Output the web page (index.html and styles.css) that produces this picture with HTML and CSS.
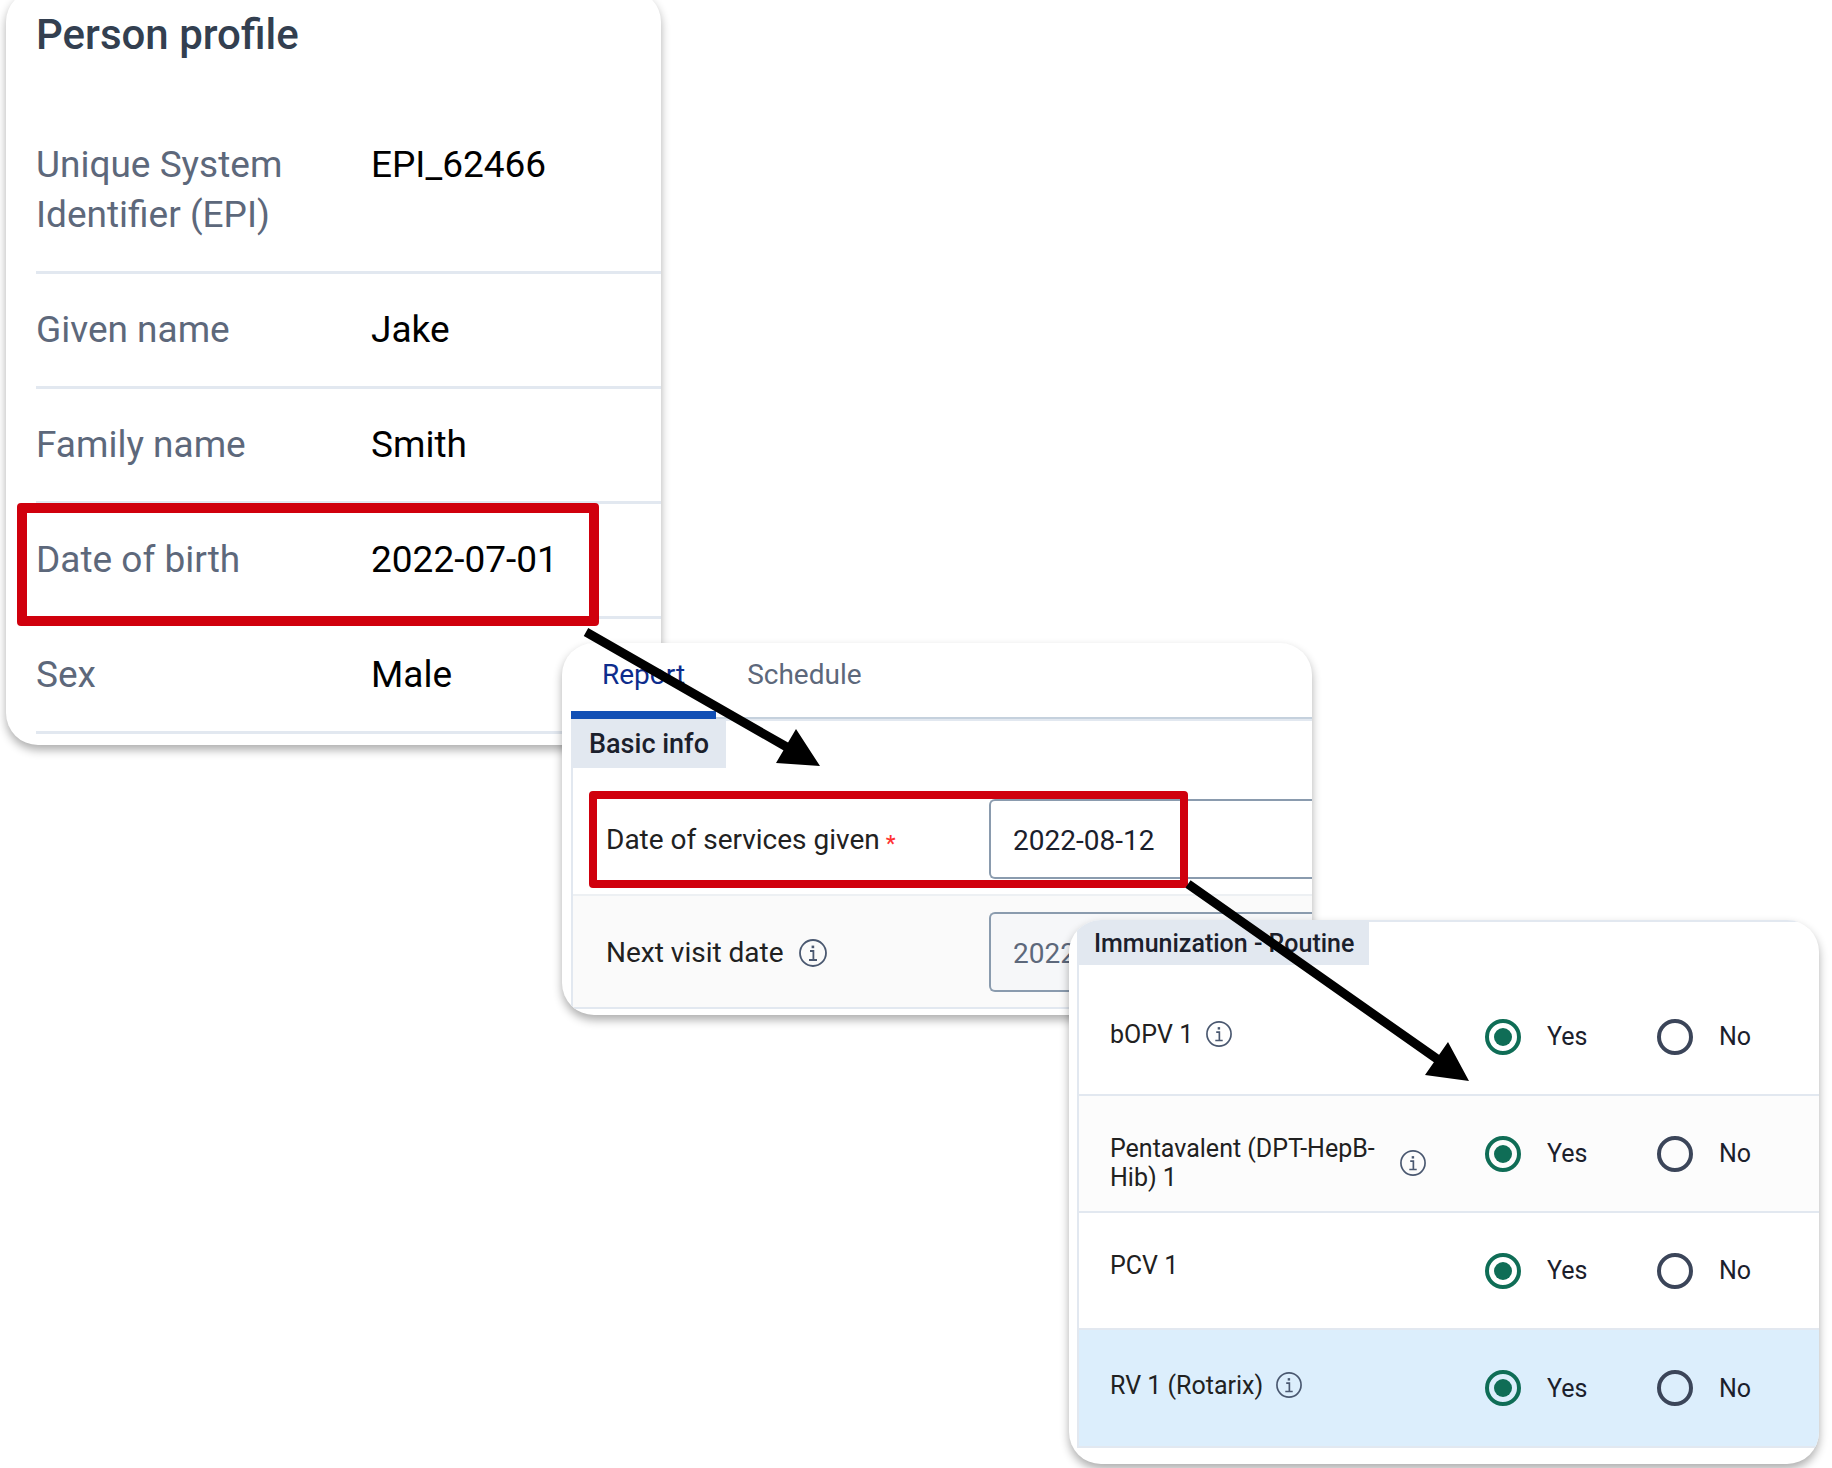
FILE: index.html
```html
<!DOCTYPE html>
<html lang="en">
<head>
<meta charset="utf-8">
<title>Person profile</title>
<link rel="stylesheet" href="styles.css">
</head>
<body>
<svg class="symbols" aria-hidden="true">
  <symbol id="info" viewBox="0 0 28 28">
    <circle cx="14" cy="14" r="13" fill="none" stroke="currentColor" stroke-width="1.8"/>
    <path d="M11 12h3.4v8.6M10 21h8" fill="none" stroke="currentColor" stroke-width="1.8"/>
    <rect x="12.6" y="6.6" width="2.6" height="2.6" fill="currentColor"/>
  </symbol>
</svg>
<main class="canvas">
  <section class="card profile">
    <h1 class="profile-title">Person profile</h1>
    <dl class="facts">
      <div class="fact"><dt>Unique System Identifier (EPI)</dt><dd>EPI_62466</dd></div>
      <div class="fact"><dt>Given name</dt><dd>Jake</dd></div>
      <div class="fact"><dt>Family name</dt><dd>Smith</dd></div>
      <div class="fact"><dt>Date of birth</dt><dd>2022-07-01</dd></div>
      <div class="fact"><dt>Sex</dt><dd>Male</dd></div>
    </dl>
  </section>

  <section class="card report">
    <nav class="tabs">
      <button class="tab active" type="button">Report</button>
      <button class="tab" type="button">Schedule</button>
    </nav>
    <div class="section">
      <h2 class="section-title">Basic info</h2>
      <div class="field">
        <label for="service-date">Date of services given <span class="required">*</span></label>
        <input id="service-date" type="text" value="2022-08-12">
      </div>
      <div class="field shaded">
        <label for="next-date">Next visit date <svg class="info"><use href="#info"/></svg></label>
        <input id="next-date" type="text" value="2022-09-09" readonly>
      </div>
    </div>
  </section>

  <section class="card vaccines">
    <div class="section">
      <h2 class="section-title">Immunization - Routine</h2>
      <div class="dose" role="radiogroup" aria-labelledby="bopv">
        <div class="dose-name"><span id="bopv">bOPV 1</span><svg class="info"><use href="#info"/></svg></div>
        <label class="choice"><input type="radio" name="bopv" checked>Yes</label>
        <label class="choice"><input type="radio" name="bopv">No</label>
      </div>
      <div class="dose shaded" role="radiogroup" aria-labelledby="penta">
        <div class="dose-name"><span id="penta">Pentavalent (DPT-HepB-Hib) 1</span><svg class="info"><use href="#info"/></svg></div>
        <label class="choice"><input type="radio" name="penta" checked>Yes</label>
        <label class="choice"><input type="radio" name="penta">No</label>
      </div>
      <div class="dose" role="radiogroup" aria-labelledby="pcv">
        <div class="dose-name"><span id="pcv">PCV 1</span></div>
        <label class="choice"><input type="radio" name="pcv" checked>Yes</label>
        <label class="choice"><input type="radio" name="pcv">No</label>
      </div>
      <div class="dose selected" role="radiogroup" aria-labelledby="rv">
        <div class="dose-name"><span id="rv">RV 1 (Rotarix)</span><svg class="info"><use href="#info"/></svg></div>
        <label class="choice"><input type="radio" name="rv" checked>Yes</label>
        <label class="choice"><input type="radio" name="rv">No</label>
      </div>
    </div>
  </section>

  <div class="highlight birth"></div>
  <div class="highlight service"></div>
  <svg class="arrows" viewBox="0 0 1832 1468" aria-hidden="true">
    <path d="M586 632L792 750M1188 884L1440 1061" stroke="#000" stroke-width="9"/>
    <path d="M796 729L820 766L776 763ZM1448 1042L1469 1081L1425 1075Z"/>
  </svg>
</main>
</body>
</html>
```
FILE: styles.css
```css
* { box-sizing: border-box; }

body {
  margin: 0;
  background: #fff;
  color: #212121;
  font-family: Roboto, "Liberation Sans", sans-serif;
}

h1, h2, dl, dd { margin: 0; }

.symbols { position: absolute; width: 0; height: 0; }

/* Free canvas that the overlapping cards are placed on */
.canvas {
  position: relative;
  min-height: 1468px;
  overflow: hidden;
}

.card {
  position: absolute;
  overflow: hidden;
  background: #fff;
  border-radius: 32px;
  box-shadow: 0 5px 10px rgba(0, 0, 0, .32);
}

/* Person profile */
.profile {
  left: 6px;
  top: -10px;
  width: 655px;
  padding: 21px 0 11px 30px;
}

.profile-title {
  color: #333f50;
  font-size: 42px;
  font-weight: 500;
  line-height: 48px;
}

.facts { padding-top: 50px; font-size: 37px; line-height: 50px; }

.fact {
  display: flex;
  padding: 31px 0;
  border-bottom: 3px solid #e2e8f0;
}

.fact dt { width: 335px; padding-right: 60px; color: #5d687b; }
.fact dd { color: #000; }

/* Report */
.report {
  left: 562px;
  top: 643px;
  width: 750px;
  padding: 0 0 6px 9px;
  font-size: 28px;
}

.tabs {
  display: flex;
  height: 76px;
  border-bottom: 2px solid #c5d1dd;
}

.tab {
  height: 76px;
  padding: 0 31px 5px;
  border: 0;
  border-bottom: 8px solid transparent;
  background: none;
  color: #5d687b;
  font: inherit;
}

.tab.active {
  border-color: #1250b5;
  color: #0d2c8c;
}

.section {
  border-top: 2px solid #e2e8f0;
  border-left: 2px solid #e2e8f0;
}

.section-title {
  width: fit-content;
  background: #e2e8f0;
  color: #1b202c;
  font-weight: 500;
}

.report .section-title {
  padding: 0 17px 0 16px;
  font-size: 27px;
  line-height: 47px;
}

.field {
  display: flex;
  align-items: center;
  height: 113px;
  padding-left: 33px;
  border-bottom: 2px solid #edf0f3;
}

.section-title + .field { height: 128px; padding-top: 15px; }

.field label {
  display: flex;
  align-items: center;
  gap: 6px;
  width: 383px;
  padding-top: 2px;
}

.required {
  align-self: end;
  color: #f33;
  font-size: 22px;
  font-weight: 500;
}

.field input {
  flex: 1;
  min-width: 0;
  height: 80px;
  padding: 3px 0 0 22px;
  border: 2px solid #8a9bae;
  border-right: 0;
  border-radius: 6px 0 0 6px;
  background: #fff;
  color: #1b202c;
  font: inherit;
}

.shaded { background: #fafafa; }
.field.shaded { border-color: #e2e8f0; }
.field.shaded input { background: #f6f7f9; color: #5d687b; }

.info { flex: none; width: 28px; height: 28px; color: #4a5870; }
.field .info { margin-left: 9px; }

/* Immunization */
.vaccines {
  left: 1069px;
  top: 920px;
  width: 750px;
  padding: 0 0 16px 8px;
  font-size: 25px;
}

.vaccines .section-title {
  padding: 0 15px;
  font-size: 25px;
  line-height: 43px;
}

.dose {
  display: grid;
  grid-template-columns: 375px 172px 1fr;
  align-items: center;
  height: 117px;
  padding-left: 31px;
  border-bottom: 2px solid #e2e8f0;
}

.section-title + .dose { height: 131px; padding-top: 14px; }
.dose.selected { height: 118px; background: #dceefc; }
.dose.shaded { background: #fcfcfc; }

.dose-name {
  display: flex;
  align-items: center;
  align-self: start;
  gap: 13px;
  padding-top: 38px;
  line-height: 29px;
}

.dose-name span { max-width: 277px; }
.dose-name .info { width: 26px; height: 26px; margin: 4px 0; }

.choice {
  display: flex;
  align-items: center;
  gap: 26px;
  color: #1b202c;
}

.choice input {
  display: grid;
  place-items: center;
  appearance: none;
  width: 36px;
  height: 36px;
  margin: 0;
  border: 4px solid #3b4559;
  border-radius: 50%;
}

.choice input:checked { border-color: #0f6d56; }

.choice input:checked::before {
  content: "";
  width: 18px;
  height: 18px;
  border-radius: 50%;
  background: #0f6d56;
}

/* Annotations over the cards */
.highlight { position: absolute; border: solid #d0000d; border-radius: 4px; }
.birth { left: 17px; top: 503px; width: 582px; height: 123px; border-width: 10px; }
.service { left: 589px; top: 791px; width: 599px; height: 97px; border-width: 8px; }
.arrows { position: absolute; left: 0; top: 0; width: 1832px; height: 1468px; pointer-events: none; }
```
